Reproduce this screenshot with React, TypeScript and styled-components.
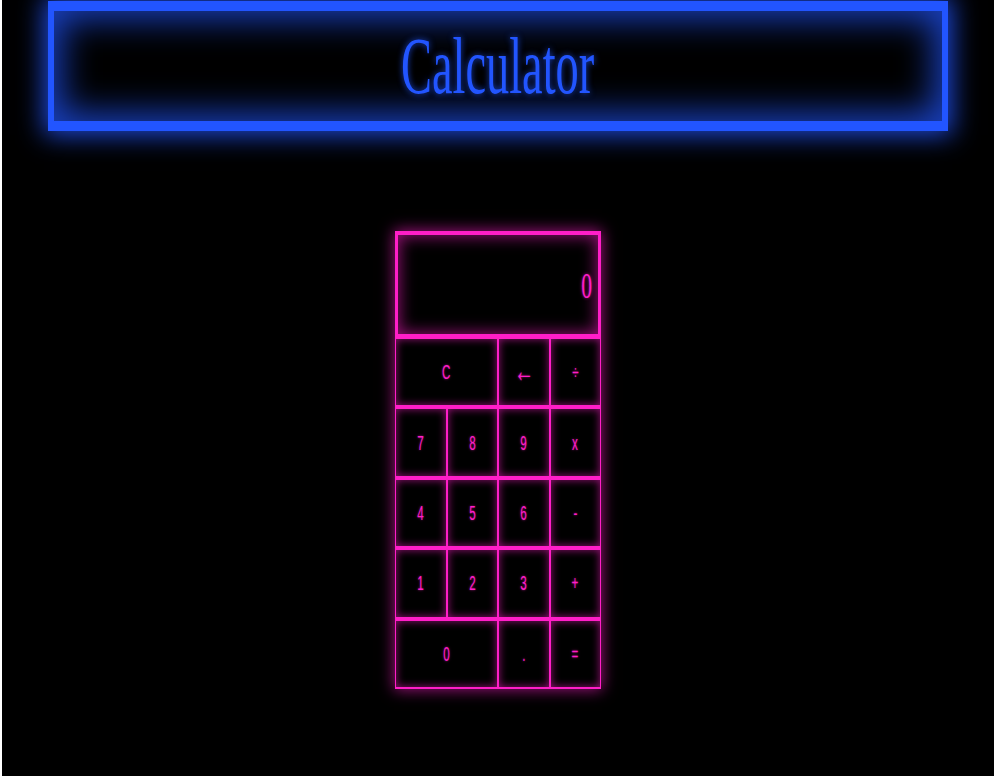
import React from "react";
import styled, { createGlobalStyle } from "styled-components";

const BLUE = "#2255ff";
const PINK = "#ff1ec8";

const Global = createGlobalStyle`
  html, body { margin: 0; padding: 0; background: #ffffff; }
  body { font-family: "Liberation Serif", serif; }
`;

const Page = styled.div`
  width: 992px;
  height: 776px;
  margin-left: 2px;
  background: #000;
  display: flex;
  flex-direction: column;
  align-items: center;
  overflow: hidden;
`;

const Header = styled.header`
  box-sizing: border-box;
  margin-top: 1px;
  width: 900px;
  height: 130px;
  border-style: solid;
  border-color: ${BLUE};
  border-width: 10px 6px;
  box-shadow: 0 0 24px 4px rgba(34, 85, 255, 0.85),
    inset 0 0 34px 8px rgba(34, 85, 255, 0.75);
  display: flex;
  align-items: center;
  justify-content: center;
`;

const Title = styled.h1`
  margin: 0;
  font-family: "Liberation Serif", "Times New Roman", serif;
  font-weight: 400;
  font-size: 80px;
  line-height: 1;
  color: ${BLUE};
  transform: scaleX(0.58);
  text-shadow: 0 0 8px rgba(34, 85, 255, 0.8);
`;

const Calc = styled.div`
  margin-top: 100px;
  width: 206px;
  display: flex;
  flex-direction: column;
  box-shadow: 0 0 14px 1px rgba(255, 30, 200, 0.6);
`;

const Display = styled.div`
  box-sizing: border-box;
  height: 106px;
  border-style: solid;
  border-color: ${PINK};
  border-width: 4px 3px 3px 3px;
  box-shadow: inset 0 0 16px 1px rgba(255, 30, 200, 0.6);
  display: flex;
  align-items: center;
  justify-content: flex-end;
  padding-right: 6px;
`;

const Readout = styled.span`
  font-family: "Liberation Serif", "Times New Roman", serif;
  font-size: 36px;
  line-height: 1;
  color: ${PINK};
  transform: scaleX(0.6);
  transform-origin: right center;
  text-shadow: 0 0 4px rgba(255, 30, 200, 0.7);
  position: relative;
  top: 1px;
`;

const Keys = styled.div`
  display: grid;
  grid-template-columns: repeat(4, 1fr);
  grid-auto-rows: 70.4px;
`;

const Key = styled.button<{ $span?: number }>`
  box-sizing: border-box;
  grid-column: span ${(p) => p.$span ?? 1};
  background: #000;
  border-style: solid;
  border-color: ${PINK};
  border-width: 2.5px 1.5px;
  box-shadow: inset 0 0 8px rgba(255, 30, 200, 0.6);
  margin: 0;
  padding: 0;
  display: flex;
  align-items: center;
  justify-content: center;
  cursor: pointer;
`;

const KeyLabel = styled.span<{ $symbol?: boolean }>`
  font-family: "Liberation Sans", Arial, sans-serif;
  font-size: ${(p) => (p.$symbol ? "34px" : "20px")};
  line-height: 1;
  color: ${PINK};
  transform: scaleX(0.58);
  text-shadow: 0 0 3px rgba(255, 30, 200, 0.7);
  position: relative;
  top: ${(p) => (p.$symbol ? "-2px" : "0")};
`;

const keys: { label: string; span?: number; symbol?: boolean }[] = [
  { label: "C", span: 2 },
  { label: "←", symbol: true },
  { label: "÷" },
  { label: "7" },
  { label: "8" },
  { label: "9" },
  { label: "x" },
  { label: "4" },
  { label: "5" },
  { label: "6" },
  { label: "-" },
  { label: "1" },
  { label: "2" },
  { label: "3" },
  { label: "+" },
  { label: "0", span: 2 },
  { label: "." },
  { label: "=" },
];

export default function App() {
  return (
    <>
      <Global />
      <Page>
        <Header>
          <Title>Calculator</Title>
        </Header>
        <Calc>
          <Display>
            <Readout>0</Readout>
          </Display>
          <Keys>
            {keys.map((k) => (
              <Key key={k.label} $span={k.span}>
                <KeyLabel $symbol={k.symbol}>{k.label}</KeyLabel>
              </Key>
            ))}
          </Keys>
        </Calc>
      </Page>
    </>
  );
}
